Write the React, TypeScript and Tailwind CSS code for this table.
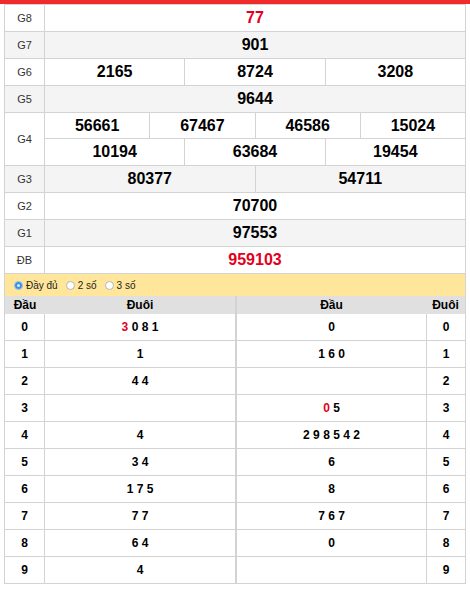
import React from 'react';

type Prize = { label: string; rows: string[][]; red?: boolean };

const prizes: Prize[] = [
  { label: 'G8', rows: [['77']], red: true },
  { label: 'G7', rows: [['901']] },
  { label: 'G6', rows: [['2165', '8724', '3208']] },
  { label: 'G5', rows: [['9644']] },
  {
    label: 'G4',
    rows: [
      ['56661', '67467', '46586', '15024'],
      ['10194', '63684', '19454'],
    ],
  },
  { label: 'G3', rows: [['80377', '54711']] },
  { label: 'G2', rows: [['70700']] },
  { label: 'G1', rows: [['97553']] },
  { label: 'ĐB', rows: [['959103']], red: true },
];

// loto digits, "r" suffix = from giải đặc biệt (red)
const tails: string[][] = [
  ['3r', '0', '8', '1'],
  ['1'],
  ['4', '4'],
  [],
  ['4'],
  ['3', '4'],
  ['1', '7', '5'],
  ['7', '7'],
  ['6', '4'],
  ['4'],
];

const heads: string[][] = [
  ['0'],
  ['1', '6', '0'],
  [],
  ['0r', '5'],
  ['2', '9', '8', '5', '4', '2'],
  ['6'],
  ['8'],
  ['7', '6', '7'],
  ['0'],
  [],
];

const Digits = ({ list }: { list: string[] }) => (
  <span>
    {list.map((d, i) => (
      <React.Fragment key={i}>
        {i > 0 && ' '}
        <span className={d.endsWith('r') ? 'text-[#e3001b]' : ''}>
          {d.replace('r', '')}
        </span>
      </React.Fragment>
    ))}
  </span>
);

const Radio = ({ checked, label }: { checked?: boolean; label: string }) => (
  <label className="flex items-center gap-[3px] mr-[8px]">
    {checked ? (
      <span className="w-[9px] h-[9px] rounded-full bg-[#3b8fe0] border border-[#9cc6ef] flex items-center justify-center">
        <span className="w-[3px] h-[3px] rounded-full bg-[#dfeeff]" />
      </span>
    ) : (
      <span className="w-[9px] h-[9px] rounded-full bg-white border border-[#b5b5b5]" />
    )}
    <span>{label}</span>
  </label>
);

export default function App() {
  return (
    <div
      className="w-[470px] h-[589px] bg-white text-black"
      style={{ fontFamily: '"Liberation Sans", Arial, sans-serif' }}
    >
      <div className="h-[4px] bg-[#f02b2b]" />

      <div className="mx-[4px] border-x border-t border-[#d3d3d3]">
        {/* results */}
        {prizes.map((p, idx) => (
          <div
            key={p.label}
            className={`flex border-b border-[#d3d3d3] ${idx % 2 ? 'bg-[#f4f4f4]' : 'bg-white'}`}
          >
            <div className="w-[40px] shrink-0 border-r border-[#d3d3d3] flex items-center justify-center text-[11px] text-[#333]">
              {p.label}
            </div>
            <div className="flex-1 flex flex-col">
              {p.rows.map((row, ri) => (
                <div
                  key={ri}
                  className={`h-[26px] flex ${ri < p.rows.length - 1 ? 'border-b border-[#d3d3d3]' : ''}`}
                >
                  {row.map((n, ci) => (
                    <div
                      key={ci}
                      className={`flex-1 flex items-center justify-center text-[16px] font-bold ${
                        ci < row.length - 1 ? 'border-r border-[#d3d3d3]' : ''
                      } ${p.red ? 'text-[#e3001b]' : ''}`}
                    >
                      {n}
                    </div>
                  ))}
                </div>
              ))}
            </div>
          </div>
        ))}

        {/* display options */}
        <div className="h-[22px] bg-[#ffe69b] flex items-center pl-[9px] text-[10px] text-[#222]">
          <Radio checked label="Đầy đủ" />
          <Radio label="2 số" />
          <Radio label="3 số" />
        </div>

        {/* loto */}
        <div className="flex text-[12px] font-bold">
          <div className="w-[231px] border-r border-[#d3d3d3]">
            <div className="h-[18px] bg-[#e0e0e0] flex items-center">
              <div className="w-[40px] text-center">Đầu</div>
              <div className="flex-1 text-center">Đuôi</div>
            </div>
            {tails.map((t, i) => (
              <div key={i} className="h-[27px] flex border-b border-[#d3d3d3]">
                <div className="w-[40px] border-r border-[#d3d3d3] flex items-center justify-center">
                  {i}
                </div>
                <div className="flex-1 flex items-center justify-center">
                  <Digits list={t} />
                </div>
              </div>
            ))}
          </div>
          <div className="flex-1 border-l border-[#d3d3d3]">
            <div className="h-[18px] bg-[#e0e0e0] flex items-center">
              <div className="flex-1 text-center">Đầu</div>
              <div className="w-[39px] text-center">Đuôi</div>
            </div>
            {heads.map((h, i) => (
              <div key={i} className="h-[27px] flex border-b border-[#d3d3d3]">
                <div className="flex-1 flex items-center justify-center">
                  <Digits list={h} />
                </div>
                <div className="w-[39px] border-l border-[#d3d3d3] flex items-center justify-center">
                  {i}
                </div>
              </div>
            ))}
          </div>
        </div>
      </div>
    </div>
  );
}
